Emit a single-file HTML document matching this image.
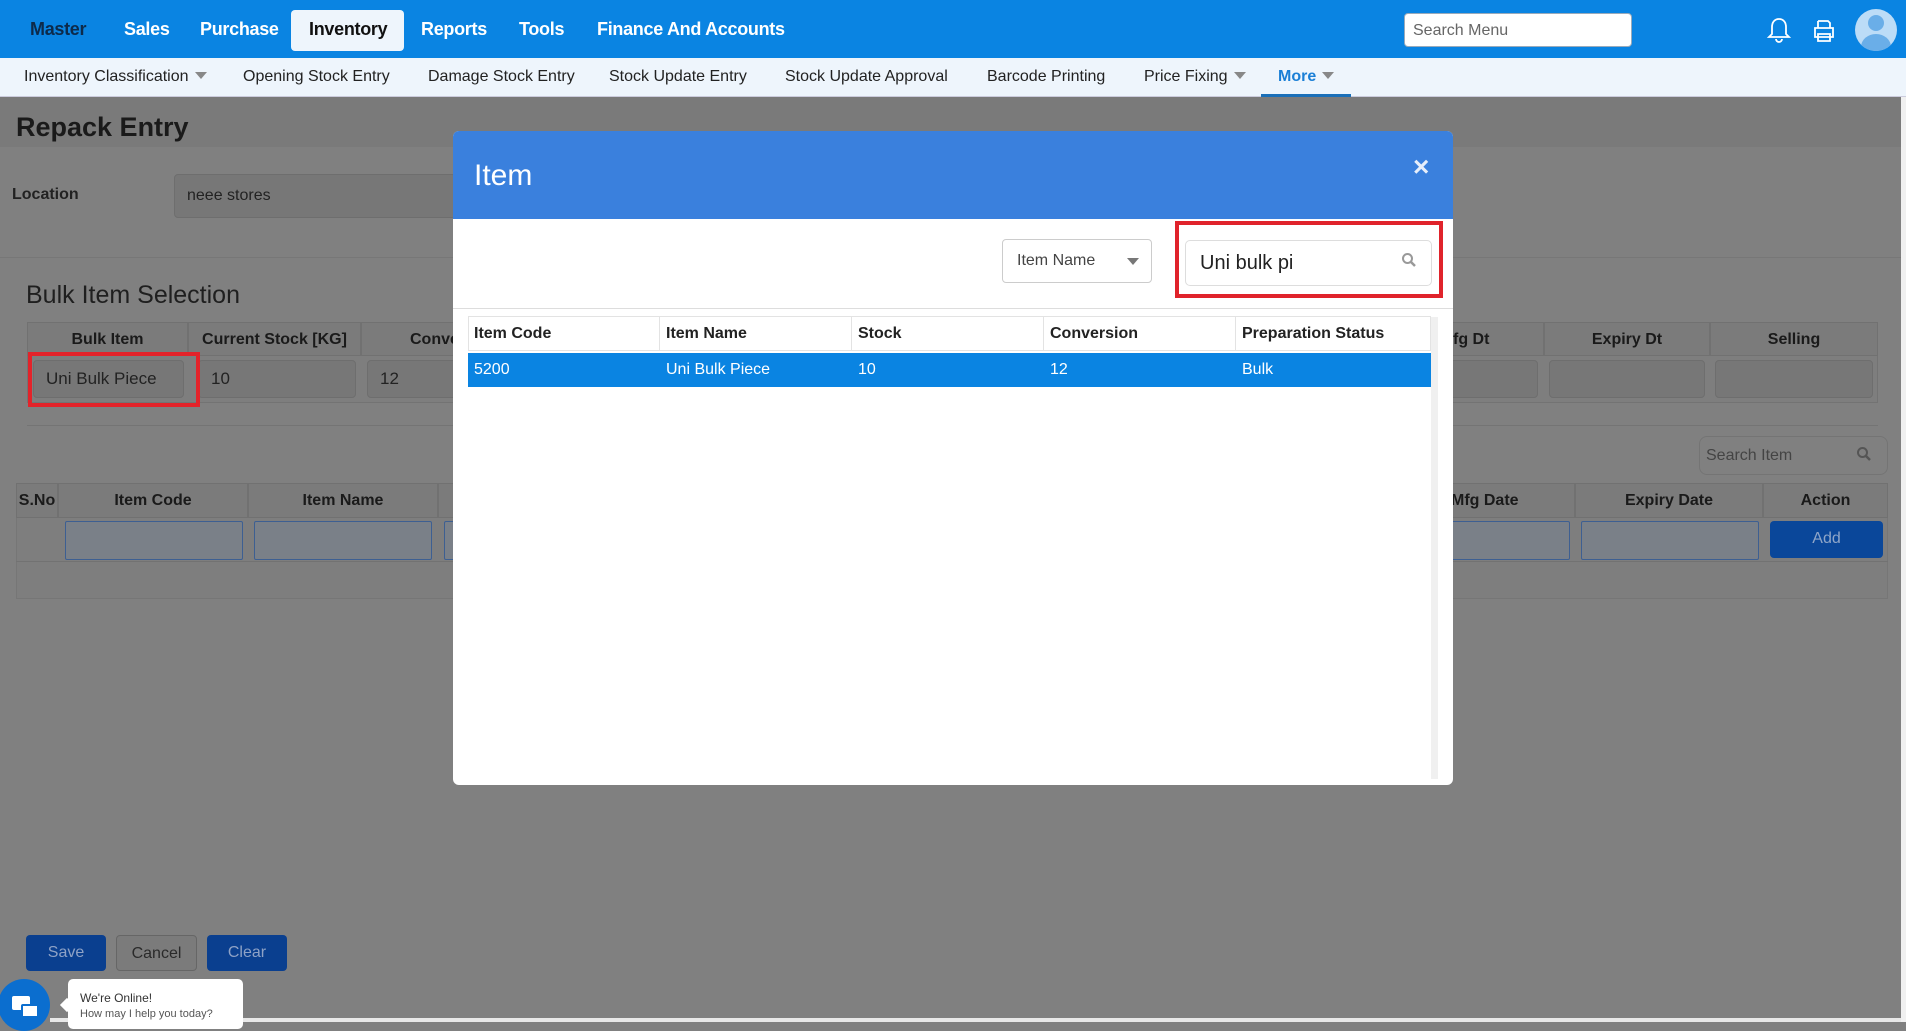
<!DOCTYPE html>
<html><head><meta charset="utf-8"><style>
*{box-sizing:border-box;margin:0;padding:0}
body{width:1906px;height:1022px;overflow:hidden;background:#808080;font-family:"Liberation Sans",sans-serif;position:relative;color:#222}
.a{position:absolute}
.top{left:0;top:0;width:1906px;height:58px;background:#0a84e2}
.tn{top:19px;font-size:18px;font-weight:bold;color:#fff;letter-spacing:-0.3px}
.sub{left:0;top:58px;width:1906px;height:39px;background:#eef5fc;border-bottom:1px solid #ccd}
.sn{top:68px;font-size:16px;color:#222}
.car{display:inline-block;width:0;height:0;border-left:6px solid transparent;border-right:6px solid transparent;border-top:7px solid #888;margin-left:6px;vertical-align:2px}
.th{background:#7b7b7b;border:1px solid #717171;font-weight:bold;font-size:16px;text-align:center;color:#1a1a1a;line-height:34px}
.inp{background:#777;border:1px solid #6e6e6e;border-radius:4px;font-size:17px;color:#222;padding-left:12px}
.binp{background:#7a8088;border:1px solid #3d5f92;border-radius:2px}
.btn{border-radius:4px;font-size:16px;text-align:center;line-height:36px}
.mt{font-size:16px;line-height:33px;padding-left:6px}
</style></head><body>
<div class="a top"></div>
<div class="a tn" style="left:30px;color:#0d2a4a">Master</div>
<div class="a tn" style="left:124px">Sales</div>
<div class="a tn" style="left:200px">Purchase</div>
<div class="a" style="left:291px;top:10px;width:113px;height:41px;background:#eef5fc;border-radius:4px"></div>
<div class="a tn" style="left:309px;color:#111">Inventory</div>
<div class="a tn" style="left:421px">Reports</div>
<div class="a tn" style="left:519px">Tools</div>
<div class="a tn" style="left:597px">Finance And Accounts</div>
<div class="a" style="left:1404px;top:13px;width:228px;height:34px;background:#fff;border-radius:4px;border:1px solid #9ab;font-size:16px;color:#666;padding:8px 8px">Search Menu</div>
<svg class="a" style="left:1766px;top:16px" width="26" height="28" viewBox="0 0 26 28"><path d="M13 3c-5 0-7 4-7 8v7l-3 3h20l-3-3v-7c0-4-2-8-7-8zM10 23a3 3 0 006 0" fill="none" stroke="#fff" stroke-width="1.8"/></svg>
<svg class="a" style="left:1812px;top:18px" width="24" height="26" viewBox="0 0 24 26"><path d="M6 3h10l2 2v5M6 3v7M3 10h18v9H3zM6 16h12v7H6z" fill="none" stroke="#fff" stroke-width="1.8"/></svg>
<div class="a" style="left:1855px;top:9px;width:42px;height:42px;border-radius:50%;background:#bcdcf7;overflow:hidden"><div class="a" style="left:13px;top:6px;width:16px;height:16px;border-radius:50%;background:#6aaee8"></div><div class="a" style="left:6px;top:25px;width:30px;height:26px;border-radius:50%;background:#6aaee8"></div></div>
<div class="a sub"></div>
<div class="a sn" style="left:24px">Inventory Classification<span class="car"></span></div>
<div class="a sn" style="left:243px">Opening Stock Entry</div>
<div class="a sn" style="left:428px">Damage Stock Entry</div>
<div class="a sn" style="left:609px">Stock Update Entry</div>
<div class="a sn" style="left:785px">Stock Update Approval</div>
<div class="a sn" style="left:987px">Barcode Printing</div>
<div class="a sn" style="left:1144px">Price Fixing<span class="car"></span></div>
<div class="a sn" style="left:1278px;color:#1a7fd6;font-weight:bold">More<span class="car"></span></div>
<div class="a" style="left:1261px;top:94px;width:90px;height:3px;background:#1a6fb8"></div>

<div class="a" style="left:0;top:97px;width:1906px;height:50px;background:#7a7a7a"></div>
<div class="a" style="left:16px;top:112px;font-size:27px;font-weight:bold;color:#1a1a1a">Repack Entry</div>
<div class="a" style="left:12px;top:186px;font-size:16px;font-weight:bold">Location</div>
<div class="a inp" style="left:174px;top:174px;width:282px;height:44px;line-height:42px;font-size:16px">neee stores</div>
<div class="a" style="left:0;top:257px;width:1906px;height:1px;background:#777"></div>
<div class="a" style="left:26px;top:281px;font-size:25px;color:#1f1f1f">Bulk Item Selection</div>
<div class="a" style="left:27px;top:322px;width:1851px;height:81px;background:#7e7e7e;border:1px solid #737373"></div>
<div class="a th" style="left:27px;top:322px;width:161px;height:34px">Bulk Item</div>
<div class="a th" style="left:188px;top:322px;width:173px;height:34px">Current Stock [KG]</div>
<div class="a th" style="left:361px;top:322px;width:100px;height:34px;text-align:left;padding-left:48px">Conve</div>
<div class="a th" style="left:1440px;top:322px;width:104px;height:34px;text-align:left;padding-left:12px">fg Dt</div>
<div class="a th" style="left:1544px;top:322px;width:166px;height:34px">Expiry Dt</div>
<div class="a th" style="left:1710px;top:322px;width:168px;height:34px">Selling</div>
<div class="a inp" style="left:33px;top:360px;width:151px;height:38px;line-height:36px">Uni Bulk Piece</div>
<div class="a inp" style="left:198px;top:360px;width:158px;height:38px;line-height:36px">10</div>
<div class="a inp" style="left:367px;top:360px;width:100px;height:38px;line-height:36px">12</div>
<div class="a inp" style="left:1448px;top:360px;width:90px;height:38px"></div>
<div class="a inp" style="left:1549px;top:360px;width:156px;height:38px"></div>
<div class="a inp" style="left:1715px;top:360px;width:158px;height:38px"></div>
<div class="a" style="left:28px;top:352px;width:172px;height:55px;border:4px solid #e3232a"></div>
<div class="a" style="left:27px;top:425px;width:1851px;height:1px;background:#747474"></div>
<div class="a" style="left:1699px;top:436px;width:189px;height:39px;border:1px solid #747474;border-radius:8px;font-size:16px;color:#444;padding:10px 6px">Search Item</div>
<svg class="a" style="left:1856px;top:446px" width="16" height="16" viewBox="0 0 16 16"><circle cx="6.5" cy="6.5" r="4.5" fill="none" stroke="#555" stroke-width="2"/><path d="M10 10l4 4" stroke="#555" stroke-width="2.5"/></svg>
<div class="a" style="left:16px;top:483px;width:1872px;height:116px;background:#7e7e7e;border:1px solid #767676"></div>
<div class="a th" style="left:16px;top:483px;width:42px;height:35px">S.No</div>
<div class="a th" style="left:58px;top:483px;width:190px;height:35px">Item Code</div>
<div class="a th" style="left:248px;top:483px;width:190px;height:35px">Item Name</div>
<div class="a th" style="left:438px;top:483px;width:30px;height:35px"></div>
<div class="a th" style="left:1390px;top:483px;width:185px;height:35px;text-align:left;padding-left:60px">Mfg Date</div>
<div class="a th" style="left:1575px;top:483px;width:188px;height:35px">Expiry Date</div>
<div class="a th" style="left:1763px;top:483px;width:125px;height:35px">Action</div>
<div class="a" style="left:16px;top:518px;width:1872px;height:44px;border-bottom:1px solid #727272"></div>
<div class="a binp" style="left:65px;top:521px;width:178px;height:39px"></div>
<div class="a binp" style="left:254px;top:521px;width:178px;height:39px"></div>
<div class="a binp" style="left:444px;top:521px;width:20px;height:39px"></div>
<div class="a binp" style="left:1420px;top:521px;width:150px;height:39px"></div>
<div class="a binp" style="left:1581px;top:521px;width:178px;height:39px"></div>
<div class="a btn" style="left:1770px;top:521px;width:113px;height:37px;background:#0a479a;color:#8fa6c8">Add</div>
<div class="a btn" style="left:26px;top:935px;width:80px;height:36px;background:#0a3f8f;color:#8ea2c6">Save</div>
<div class="a btn" style="left:116px;top:935px;width:81px;height:36px;background:#7b7b7b;border:1px solid #666;color:#2a2a2a">Cancel</div>
<div class="a btn" style="left:207px;top:935px;width:80px;height:36px;background:#0a3f8f;color:#8ea2c6">Clear</div>
<div class="a" style="left:50px;top:1018px;width:1856px;height:4px;background:#e8e8e8"></div>
<div class="a" style="left:1901px;top:97px;width:5px;height:925px;background:#f0f0f0"></div>
<div class="a" style="left:-2px;top:979px;width:52px;height:52px;border-radius:50%;background:#0b6ecf"></div>
<div class="a" style="left:12px;top:996px;width:18px;height:14px;background:#fff;border-radius:2px"></div>
<div class="a" style="left:21px;top:1004px;width:18px;height:14px;background:#fff;border:2px solid #0b6ecf;border-radius:2px"></div>
<div class="a" style="left:62px;top:1000px;width:10px;height:10px;background:#fff;transform:rotate(45deg)"></div>
<div class="a" style="left:68px;top:979px;width:175px;height:50px;background:#fff;border-radius:5px"></div>
<div class="a" style="left:80px;top:991px;font-size:12px;color:#333">We're Online!</div>
<div class="a" style="left:80px;top:1008px;font-size:11px;color:#555">How may I help you today?</div>

<!-- modal -->
<div class="a" style="left:453px;top:131px;width:1000px;height:654px;background:#fff;border-radius:6px;overflow:hidden">
 <div class="a" style="left:0;top:0;width:1000px;height:88px;background:#3a80dd"></div>
 <div class="a" style="left:21px;top:28px;font-size:30px;color:#fff">Item</div>
 <div class="a" style="left:960px;top:20px;font-size:28px;color:#e6eefa;font-weight:bold">×</div>
 <div class="a" style="left:0;top:177px;width:1000px;height:1px;background:#ddd"></div>
 <div class="a" style="left:549px;top:108px;width:150px;height:44px;border:1px solid #ccc;border-radius:4px;font-size:16px;color:#444;padding:12px 14px">Item Name</div>
 <div class="a" style="left:674px;top:127px;border-left:6px solid transparent;border-right:6px solid transparent;border-top:7px solid #777"></div>
 <div class="a" style="left:732px;top:109px;width:247px;height:46px;border:1px solid #ddd;border-radius:5px;font-size:20px;color:#222;padding:11px 14px">Uni bulk pi</div>
 <svg class="a" style="left:948px;top:121px" width="16" height="16" viewBox="0 0 16 16"><circle cx="6.5" cy="6.5" r="4.5" fill="none" stroke="#999" stroke-width="2"/><path d="M10 10l4 4" stroke="#999" stroke-width="2.5"/></svg>
 <div class="a" style="left:722px;top:90px;width:268px;height:77px;border:4px solid #e0232b"></div>
 <div class="a" style="left:15px;top:185px;width:963px;height:35px;border:1px solid #e3e3e3"></div>
 <div class="a mt" style="left:15px;top:186px;width:192px;font-weight:bold;border-right:1px solid #e3e3e3">Item Code</div>
 <div class="a mt" style="left:207px;top:186px;width:192px;font-weight:bold;border-right:1px solid #e3e3e3">Item Name</div>
 <div class="a mt" style="left:399px;top:186px;width:192px;font-weight:bold;border-right:1px solid #e3e3e3">Stock</div>
 <div class="a mt" style="left:591px;top:186px;width:192px;font-weight:bold;border-right:1px solid #e3e3e3">Conversion</div>
 <div class="a mt" style="left:783px;top:186px;width:192px;font-weight:bold">Preparation Status</div>
 <div class="a" style="left:15px;top:222px;width:963px;height:34px;background:#0a84e2"></div>
 <div class="a mt" style="left:15px;top:222px;color:#fff">5200</div>
 <div class="a mt" style="left:207px;top:222px;color:#fff">Uni Bulk Piece</div>
 <div class="a mt" style="left:399px;top:222px;color:#fff">10</div>
 <div class="a mt" style="left:591px;top:222px;color:#fff">12</div>
 <div class="a mt" style="left:783px;top:222px;color:#fff">Bulk</div>
 <div class="a" style="left:978px;top:186px;width:7px;height:462px;background:#f0f0f0"></div>
</div>
</body></html>
